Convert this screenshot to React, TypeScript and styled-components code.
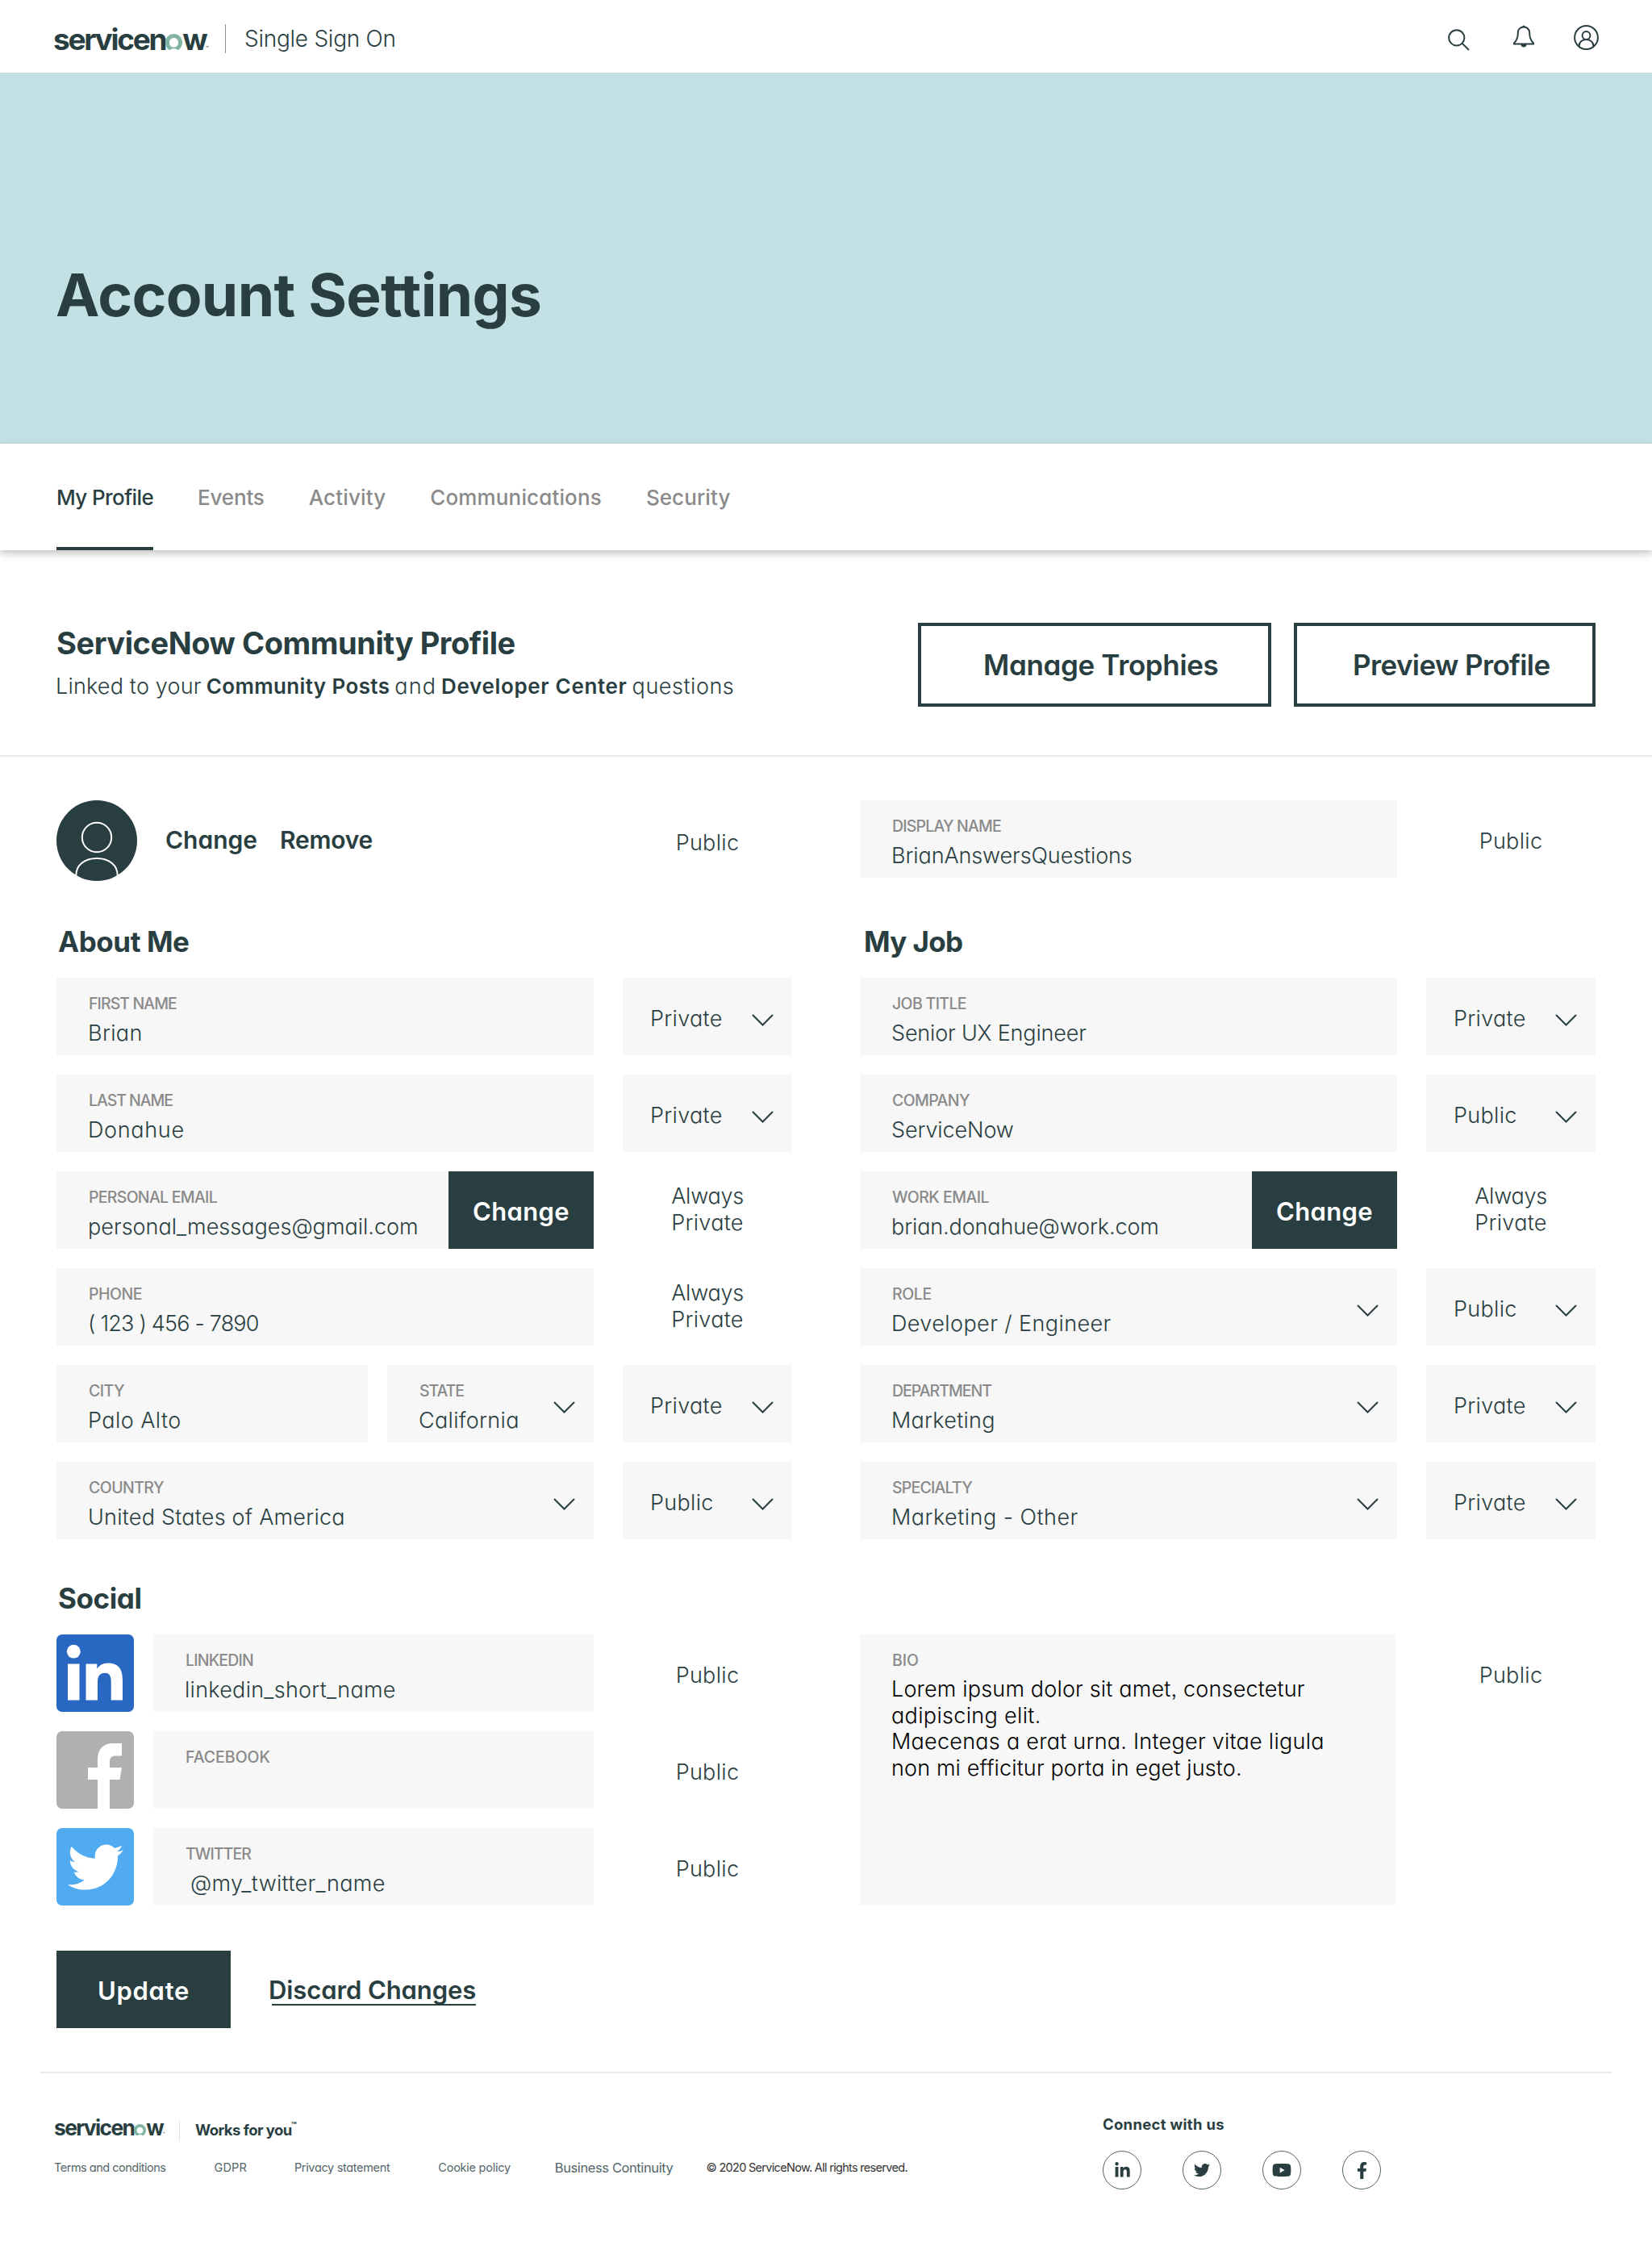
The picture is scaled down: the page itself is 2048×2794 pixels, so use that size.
import React, { useLayoutEffect, useRef, useState } from "react";
import styled, { createGlobalStyle } from "styled-components";
import { FaFacebookF, FaLinkedinIn, FaTwitter, FaYoutube } from "react-icons/fa";

const ink = "#293e40";
const muted = "#8a8a8a";
const panel = "#f7f7f7";

const GlobalStyle = createGlobalStyle`
  *, *::before, *::after { box-sizing: border-box; }
  body {
    margin: 0;
    background: #fff;
    color: ${ink};
    font-family: Inter, "Liberation Sans", sans-serif;
    font-feature-settings: "cv11", "ss03", "calt" 0;
  }
  button { font: inherit; color: inherit; border: 0; background: none; padding: 0; }
  h1, h2, h3, p { margin: 0; }
`;

/* Tracks a run of text out (or in) until it spans the given width. */
const Run = styled.span`
  display: inline-block;
  white-space: pre;
`;

function Fit({ w, children }: { w: number; children: string }) {
  const ref = useRef<HTMLSpanElement>(null);
  const [spacing, setSpacing] = useState(0);
  useLayoutEffect(() => {
    const el = ref.current;
    if (!el) return;
    const size = parseFloat(getComputedStyle(el).fontSize);
    const natural = el.getBoundingClientRect().width;
    setSpacing((w + size * 0.1 - natural) / children.length);
  }, []);
  return (
    <Run ref={ref} style={{ letterSpacing: spacing }}>
      {children}
    </Run>
  );
}

const Page = styled.div`
  width: 2048px;
  height: 2794px;
  overflow: hidden;
`;

/* ---------- header ---------- */

const Header = styled.header`
  height: 90px;
  display: flex;
  align-items: center;
  padding: 0 66px 0 66px;
`;

const LogoBox = styled.span<{ $size: number }>`
  display: inline-flex;
  align-items: baseline;
  font-size: ${(p) => p.$size}px;
  line-height: 1;
  font-weight: 700;
`;

const LogoO = styled.svg`
  overflow: visible;
`;

const Tm = styled.span`
  font-size: 0.16em;
  font-weight: 600;
`;

function Logo({ size }: { size: number }) {
  const k = size / 37;
  return (
    <LogoBox $size={size}>
      <Fit w={135.5 * k}>servicen</Fit>
      <LogoO width={21 * k} height={20 * k} viewBox="0 0 22 20" preserveAspectRatio="none">
        <path
          d="M11 0 C4.9 0 0 4.7 0 10.6 C0 14.2 1.6 17.3 4.2 19.4 C4.9 20 5.8 20 6.6 19.5 C7.8 18.7 9.3 18.2 11 18.2 C12.7 18.2 14.2 18.7 15.4 19.5 C16.2 20 17.1 20 17.8 19.4 C20.4 17.3 22 14.2 22 10.6 C22 4.7 17.1 0 11 0 Z M11 16.6 C7.7 16.6 5.2 14.1 5.2 10.9 C5.2 7.6 7.7 5.1 11 5.1 C14.3 5.1 16.8 7.6 16.8 10.9 C16.8 14.1 14.3 16.6 11 16.6 Z"
          fill="#81b5a1"
          fillRule="evenodd"
        />
      </LogoO>
      <Fit w={25 * k}>w</Fit>
      <Tm>™</Tm>
    </LogoBox>
  );
}

const HeaderLogo = styled.div`
  width: 214px;
  border-right: 1px solid #8a9798;
  height: 36px;
  margin-top: 6px;
  display: flex;
  align-items: center;
`;

const Product = styled.span`
  margin: 5px auto 0 23px;
  font-size: 28px;
  font-weight: 300;
`;

const HeaderIcons = styled.div`
  display: flex;
  align-items: center;
`;

const HeaderIcon = styled.svg<{ $gap?: number; $up?: number }>`
  display: block;
  margin-left: ${(p) => p.$gap ?? 0}px;
  margin-bottom: ${(p) => p.$up ?? 0}px;
  fill: none;
  stroke: ${ink};
  stroke-width: 2;
`;

/* ---------- banner and tabs ---------- */

const Banner = styled.section`
  height: 460px;
  background: #c3e0e5;
  padding: 231px 0 0 69px;
`;

const Title = styled.h1`
  font-size: 73px;
  line-height: 90px;
  font-weight: 700;
`;

const Tabs = styled.nav`
  position: relative;
  height: 132px;
  display: flex;
  gap: 55px;
  padding-left: 70px;
  box-shadow: 0 4px 9px rgba(0, 0, 0, 0.24);
`;

const Tab = styled.a<{ $active?: boolean }>`
  height: 132px;
  padding-top: 50px;
  font-size: 26px;
  line-height: 34px;
  font-weight: 500;
  color: ${(p) => (p.$active ? ink : muted)};
  border-bottom: 4px solid ${(p) => (p.$active ? ink : "transparent")};
`;

/* ---------- profile intro ---------- */

const Intro = styled.section`
  height: 256px;
  padding: 90px 70px 0;
  display: flex;
  justify-content: space-between;
  border-bottom: 2px solid #e9e9e9;
`;

const IntroTitle = styled.h2`
  margin-top: 3px;
  font-size: 38px;
  line-height: 44px;
  font-weight: 700;
`;

const IntroText = styled.p`
  margin: 16px 0 0 -1px;
  display: flex;
  gap: 6px;
  font-size: 27px;
  line-height: 32px;
  font-weight: 300;
  b { font-size: 26px; font-weight: 600; }
`;

const IntroActions = styled.div`
  display: flex;
  gap: 28px;
`;

const OutlineButton = styled.button<{ $width: number; $pad: number }>`
  width: ${(p) => p.$width}px;
  height: 104px;
  border: 4px solid ${ink};
  padding-left: ${(p) => p.$pad}px;
  text-align: left;
  font-size: 35px;
  font-weight: 600;
`;

/* ---------- form ---------- */

const Form = styled.main`
  padding: 54px 70px 0;
`;

const Columns = styled.div`
  display: grid;
  grid-template-columns: 912px 912px;
  column-gap: 84px;
`;

const Column = styled.div<{ $top?: number }>`
  display: flex;
  flex-direction: column;
  gap: 24px;
  padding-top: ${(p) => p.$top ?? 0}px;
`;

const Heading = styled.h3<{ $top: number; $indent?: number }>`
  padding: ${(p) => p.$top}px 0 0 ${(p) => p.$indent ?? 2}px;
  font-size: 35px;
  line-height: 41px;
  font-weight: 700;
`;

const Row = styled.div`
  display: grid;
  grid-template-columns: 666px 210px;
  column-gap: 36px;
`;

const Fields = styled.div`
  display: flex;
  gap: 24px;
`;

const Field = styled.div<{ $width?: number; $height?: number }>`
  width: ${(p) => p.$width ?? 666}px;
  height: ${(p) => p.$height ?? 96}px;
  background: ${panel};
  display: flex;
  justify-content: space-between;
`;

const FieldText = styled.div`
  padding: 21px 0 0 39px;
`;

const Label = styled.div`
  padding-left: 1px;
  font-size: 19.5px;
  line-height: 22px;
  font-weight: 500;
  color: ${muted};
`;

const Value = styled.div<{ $indent?: number }>`
  margin-top: 9px;
  padding-left: ${(p) => p.$indent ?? 0}px;
  font-size: 27px;
  line-height: 33px;
  font-weight: 300;
`;

const BioText = styled.div`
  margin-top: 9px;
  display: flex;
  flex-direction: column;
  align-items: flex-start;
  font-size: 27px;
  line-height: 32.5px;
  font-weight: 300;
  color: #000;
`;

const FieldButton = styled.button`
  width: 180px;
  background: ${ink};
  color: #fff;
  font-size: 31px;
  font-weight: 600;
  padding-top: 2px;
`;

const ChevronSvg = styled.svg`
  margin: 45px 23px 0 0;
  fill: none;
  stroke: ${ink};
  stroke-width: 2;
`;

function Chevron() {
  return (
    <ChevronSvg width="27" height="15" viewBox="0 0 27 15">
      <path d="M1 1 L13.5 13.5 L26 1" />
    </ChevronSvg>
  );
}

const PrivacySelect = styled.div`
  height: 96px;
  background: ${panel};
  display: flex;
  justify-content: space-between;
  padding-left: 34px;
  font-size: 27px;
  line-height: 101px;
  font-weight: 300;
`;

const PrivacyNote = styled.div<{ $top?: number }>`
  display: flex;
  flex-direction: column;
  align-items: center;
  padding-top: ${(p) => p.$top ?? 34}px;
  font-size: 27px;
  line-height: 33px;
  font-weight: 300;
`;

function Privacy({ value }: { value: "Private" | "Public" }) {
  return (
    <PrivacySelect>
      <Fit w={value === "Private" ? 87 : 76}>{value}</Fit>
      <Chevron />
    </PrivacySelect>
  );
}

function PublicNote({ top }: { top?: number }) {
  return (
    <PrivacyNote $top={top}>
      <Fit w={76}>Public</Fit>
    </PrivacyNote>
  );
}

function AlwaysPrivate() {
  return (
    <PrivacyNote $top={14}>
      <Fit w={87}>Always</Fit>
      <Fit w={87}>Private</Fit>
    </PrivacyNote>
  );
}

type InputProps = {
  label: string;
  lw: number;
  value?: string;
  vw?: number;
  width?: number;
  select?: boolean;
  change?: boolean;
  indent?: number;
};

function Input({ label, lw, value, vw = 0, width, select, change, indent }: InputProps) {
  return (
    <Field $width={width}>
      <FieldText>
        <Label>
          <Fit w={lw}>{label}</Fit>
        </Label>
        {value && (
          <Value $indent={indent}>
            <Fit w={vw}>{value}</Fit>
          </Value>
        )}
      </FieldText>
      {select && <Chevron />}
      {change && (
        <FieldButton>
          <Fit w={117}>Change</Fit>
        </FieldButton>
      )}
    </Field>
  );
}

const PhotoRow = styled.div`
  display: grid;
  grid-template-columns: 100px 602px 210px;
  height: 100px;
`;

const PhotoActions = styled.div`
  display: flex;
  gap: 28px;
  padding-left: 35px;
  font-size: 30px;
  line-height: 99px;
  font-weight: 600;
`;

const SocialTile = styled.div<{ $bg: string }>`
  width: 96px;
  height: 96px;
  border-radius: 7px;
  overflow: hidden;
  background: ${(p) => p.$bg};
  color: #fff;
  display: flex;
  align-items: center;
  justify-content: center;
`;

const Actions = styled.div`
  display: flex;
  height: 96px;
  margin-top: 56px;
  font-size: 31px;
  font-weight: 600;
`;

const UpdateButton = styled.button`
  width: 216px;
  height: 96px;
  background: ${ink};
  color: #fff;
  padding-top: 2px;
`;

const DiscardLink = styled.a`
  position: relative;
  margin-left: 47px;
  line-height: 98px;
  &::after {
    content: "";
    position: absolute;
    left: 4px;
    right: 0;
    top: 66px;
    height: 2px;
    background: ${ink};
  }
`;

/* ---------- footer ---------- */

const Footer = styled.footer`
  margin: 54px 50px 0;
  border-top: 2px solid #ebebeb;
  display: flex;
`;

const FooterLeft = styled.div`
  width: 1317px;
  padding: 56px 0 0 17px;
`;

const Brand = styled.div`
  display: flex;
  align-items: center;
  height: 28px;
`;

const BrandLogo = styled.div`
  width: 156px;
  height: 25px;
  padding-bottom: 5px;
  border-right: 1px solid #dcdfdf;
  display: flex;
  align-items: center;
`;

const Slogan = styled.div`
  margin-left: 19px;
  font-size: 18.5px;
  line-height: 28px;
  font-weight: 700;
  display: flex;
  sup {
    font-size: 11px;
    line-height: 17px;
    margin-left: -1px;
  }
`;

const Links = styled.div`
  display: flex;
  align-items: center;
  margin-top: 22px;
  height: 22px;
  font-size: 14.5px;
  line-height: 22px;
`;

const FootLink = styled.a<{ $gap?: number; $size?: number; $color?: string }>`
  margin-left: ${(p) => p.$gap ?? 0}px;
  font-size: ${(p) => p.$size ?? 14.5}px;
  color: ${(p) => p.$color ?? "#54666a"};
`;

const Connect = styled.div`
  padding-top: 51px;
`;

const ConnectTitle = styled.div`
  font-size: 18.5px;
  line-height: 24px;
  font-weight: 700;
`;

const Circles = styled.div`
  display: flex;
  gap: 51px;
  margin-top: 21px;
`;

const Circle = styled.a`
  width: 48px;
  height: 48px;
  border: 1.5px solid #54666a;
  border-radius: 50%;
  display: flex;
  align-items: center;
  justify-content: center;
  color: ${ink};
`;

export default function App() {
  return (
    <Page>
      <GlobalStyle />
      <Header>
        <HeaderLogo>
          <Logo size={37} />
        </HeaderLogo>
        <Product>
          <Fit w={185}>Single Sign On</Fit>
        </Product>
        <HeaderIcons>
          <HeaderIcon width="27" height="27" viewBox="0 0 27 27" $up={-9}>
            <circle cx="10.8" cy="10.8" r="9.6" />
            <path d="M17.6 17.6 L26 26" />
          </HeaderIcon>
          <HeaderIcon width="28" height="30" viewBox="0 0 28 30" $gap={53} $up={-1}>
            <path d="M14 2.6 C9.3 2.6 6.8 5.8 6.8 10 C6.8 16 5.6 19 2 22.4 L2 23.4 H26 L26 22.4 C22.4 19 21.2 16 21.2 10 C21.2 5.8 18.7 2.6 14 2.6 Z" />
            <path d="M12.2 2.4 a1.8 1.8 0 0 1 3.6 0 Z M10.5 24 h7 a3.5 3.5 0 0 1 -7 0 Z" fill={ink} stroke="none" />
          </HeaderIcon>
          <HeaderIcon width="31" height="31" viewBox="0 0 31 31" $gap={48} $up={-3}>
            <circle cx="15.5" cy="15.5" r="14.4" />
            <circle cx="15.5" cy="13" r="4.9" />
            <path d="M6.6 26.5 C6.6 21.4 10.2 18 15.5 18 C20.8 18 24.4 21.4 24.4 26.5" />
          </HeaderIcon>
        </HeaderIcons>
      </Header>

      <Banner>
        <Title>
          <Fit w={595}>Account Settings</Fit>
        </Title>
      </Banner>

      <Tabs>
        <Tab $active><Fit w={117.5}>My Profile</Fit></Tab>
        <Tab><Fit w={80}>Events</Fit></Tab>
        <Tab><Fit w={93}>Activity</Fit></Tab>
        <Tab><Fit w={210}>Communications</Fit></Tab>
        <Tab><Fit w={102}>Security</Fit></Tab>
      </Tabs>

      <Intro>
        <div>
          <IntroTitle>
            <Fit w={565}>ServiceNow Community Profile</Fit>
          </IntroTitle>
          <IntroText>
            <Fit w={178}>Linked to your</Fit>
            <b><Fit w={225}>Community Posts</Fit></b>
            <Fit w={49}>and</Fit>
            <b><Fit w={228}>Developer Center</Fit></b>
            <Fit w={124}>questions</Fit>
          </IntroText>
        </div>
        <IntroActions>
          <OutlineButton $width={438} $pad={77}>
            <Fit w={288}>Manage Trophies</Fit>
          </OutlineButton>
          <OutlineButton $width={374} $pad={69}>
            <Fit w={241}>Preview Profile</Fit>
          </OutlineButton>
        </IntroActions>
      </Intro>

      <Form>
        <Columns>
          <PhotoRow>
            <svg width="100" height="100" viewBox="0 0 100 100">
              <circle cx="50" cy="50" r="50" fill={ink} />
              <g fill="none" stroke="#fff" strokeWidth="2">
                <circle cx="50" cy="46" r="18.2" />
                <path d="M24.3 93 C24.3 81 34 72 50 72 C66 72 75.7 81 75.7 93" />
              </g>
            </svg>
            <PhotoActions>
              <Fit w={111}>Change</Fit>
              <Fit w={112}>Remove</Fit>
            </PhotoActions>
            <PublicNote top={36} />
          </PhotoRow>
          <Row>
            <Input label="DISPLAY NAME" lw={133} value="BrianAnswersQuestions" vw={296} />
            <PublicNote />
          </Row>
        </Columns>

        <Columns>
          <Column>
            <Heading $top={55}><Fit w={159}>About Me</Fit></Heading>
            <Row>
              <Input label="FIRST NAME" lw={107} value="Brian" vw={65} />
              <Privacy value="Private" />
            </Row>
            <Row>
              <Input label="LAST NAME" lw={102} value="Donahue" vw={117} />
              <Privacy value="Private" />
            </Row>
            <Row>
              <Input label="PERSONAL EMAIL" lw={157} value="personal_messages@gmail.com" vw={407} change />
              <AlwaysPrivate />
            </Row>
            <Row>
              <Input label="PHONE" lw={64} value="( 123 ) 456 - 7890" vw={209} />
              <AlwaysPrivate />
            </Row>
            <Row>
              <Fields>
                <Input label="CITY" lw={42} value="Palo Alto" vw={113} width={386} />
                <Input label="STATE" lw={53} value="California" vw={122} width={256} select />
              </Fields>
              <Privacy value="Private" />
            </Row>
            <Row>
              <Input label="COUNTRY" lw={91} value="United States of America" vw={316} select />
              <Privacy value="Public" />
            </Row>
          </Column>
          <Column>
            <Heading $top={55} $indent={5}><Fit w={119}>My Job</Fit></Heading>
            <Row>
              <Input label="JOB TITLE" lw={90} value="Senior UX Engineer" vw={239} />
              <Privacy value="Private" />
            </Row>
            <Row>
              <Input label="COMPANY" lw={94} value="ServiceNow" vw={149} />
              <Privacy value="Public" />
            </Row>
            <Row>
              <Input label="WORK EMAIL" lw={118} value="brian.donahue@work.com" vw={329} change />
              <AlwaysPrivate />
            </Row>
            <Row>
              <Input label="ROLE" lw={47} value="Developer / Engineer" vw={270} select />
              <Privacy value="Public" />
            </Row>
            <Row>
              <Input label="DEPARTMENT" lw={121} value="Marketing" vw={126} select />
              <Privacy value="Private" />
            </Row>
            <Row>
              <Input label="SPECIALTY" lw={97} value="Marketing - Other" vw={229} select />
              <Privacy value="Private" />
            </Row>
          </Column>
        </Columns>

        <Columns>
          <Column>
            <Heading $top={53}><Fit w={100}>Social</Fit></Heading>
            <Row>
              <Fields>
                <SocialTile $bg="#2867c2">
                  <svg width="96" height="96" viewBox="0 0 96 96" fill="#fff">
                    <circle cx="21.3" cy="21.2" r="8.4" />
                    <path d="M14 36.5 H28.5 V81.5 H14 Z" />
                    <path d="M36.5 36.5 H50.3 V42.7 C52.5 38.5 57.5 35.4 64 35.4 C78.5 35.4 82 45 82 57 V81.5 H67.7 V59.8 C67.7 54 67.3 47.7 60 47.7 C52.8 47.7 51 53 51 59.5 V81.5 H36.5 Z" />
                  </svg>
                </SocialTile>
                <Input label="LINKEDIN" lw={82} value="linkedin_short_name" vw={259} width={546} />
              </Fields>
              <PublicNote />
            </Row>
            <Row>
              <Fields>
                <SocialTile $bg="#b0b0b0">
                  <svg width="96" height="96" viewBox="0 0 96 96" fill="#fff">
                    <path d="M51 96 V60 H39 V45 H51 V35.5 C51 22 58 15 70 15 H81 V30.5 H73.5 C68 30.5 66 33 66 38 V45 H81 L78.5 60 H66 V96 Z" />
                  </svg>
                </SocialTile>
                <Input label="FACEBOOK" lw={103} width={546} />
              </Fields>
              <PublicNote />
            </Row>
            <Row>
              <Fields>
                <SocialTile $bg="#50abf1">
                  <FaTwitter size={69} />
                </SocialTile>
                <Input label="TWITTER" lw={79} value="@my_twitter_name" vw={239} width={546} indent={7} />
              </Fields>
              <PublicNote />
            </Row>
          </Column>
          <Column $top={118}>
            <Row>
              <Field $width={664} $height={336}>
                <FieldText>
                  <Label><Fit w={31}>BIO</Fit></Label>
                  <BioText>
                    <Fit w={510}>Lorem ipsum dolor sit amet, consectetur</Fit>
                    <Fit w={183}>adipiscing elit.</Fit>
                    <Fit w={534}>Maecenas a erat urna. Integer vitae ligula</Fit>
                    <Fit w={432}>non mi efficitur porta in eget justo.</Fit>
                  </BioText>
                </FieldText>
              </Field>
              <PublicNote />
            </Row>
          </Column>
        </Columns>

        <Actions>
          <UpdateButton><Fit w={111}>Update</Fit></UpdateButton>
          <DiscardLink><Fit w={254}>Discard Changes</Fit></DiscardLink>
        </Actions>
      </Form>

      <Footer>
        <FooterLeft>
          <Brand>
            <BrandLogo>
              <Logo size={26.4} />
            </BrandLogo>
            <Slogan>
              <Fit w={118}>Works for you</Fit>
              <sup>™</sup>
            </Slogan>
          </Brand>
          <Links>
            <FootLink><Fit w={137}>Terms and conditions</Fit></FootLink>
            <FootLink $gap={60}><Fit w={39}>GDPR</Fit></FootLink>
            <FootLink $gap={59}><Fit w={117}>Privacy statement</Fit></FootLink>
            <FootLink $gap={60}><Fit w={88}>Cookie policy</Fit></FootLink>
            <FootLink $gap={55} $size={16.5}><Fit w={145}>Business Continuity</Fit></FootLink>
            <FootLink $gap={41} $color="#333"><Fit w={248}>© 2020 ServiceNow. All rights reserved.</Fit></FootLink>
          </Links>
        </FooterLeft>
        <Connect>
          <ConnectTitle><Fit w={149}>Connect with us</Fit></ConnectTitle>
          <Circles>
            <Circle><FaLinkedinIn size={21} /></Circle>
            <Circle><FaTwitter size={20} /></Circle>
            <Circle><FaYoutube size={24} /></Circle>
            <Circle><FaFacebookF size={21} /></Circle>
          </Circles>
        </Connect>
      </Footer>
    </Page>
  );
}
